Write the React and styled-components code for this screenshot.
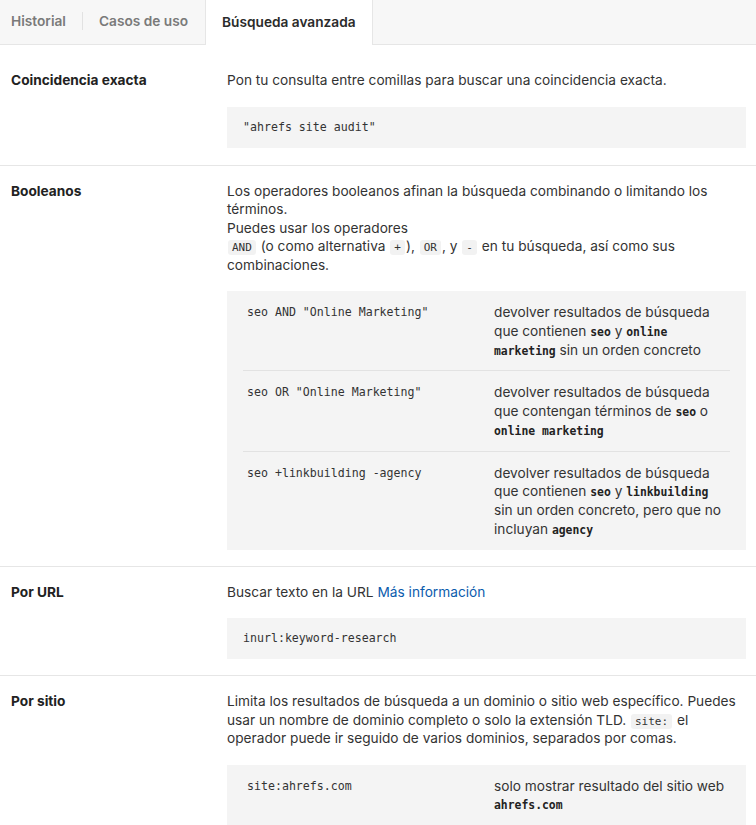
import React from "react";
import styled, { createGlobalStyle, css } from "styled-components";

const GlobalStyle = createGlobalStyle`
  html, body {
    margin: 0;
    padding: 0;
    background: #ffffff;
  }
  body {
    font-family: Inter, "Noto Sans", "Liberation Sans", sans-serif;
    color: #333333;
    -webkit-font-smoothing: antialiased;
  }
`;

const mono = `"DejaVu Sans Mono", "Liberation Mono", monospace`;

const Page = styled.div`
  width: 756px;
`;

const TabBar = styled.div`
  display: flex;
  align-items: stretch;
  height: 45px;
  background: #f7f7f7;
  border-bottom: 1px solid #e6e6e6;
  box-sizing: border-box;
  padding-left: 11px;
`;

const Tab = styled.div`
  display: flex;
  align-items: center;
  font-size: 13.7px;
  font-weight: 600;
  color: #7a7a7a;
  padding: 0 16px 2px 0;
  ${(p) =>
    p.$divider &&
    css`
      &::after {
        content: "";
        width: 1px;
        height: 18px;
        background: #e2e2e2;
        margin-left: 16px;
      }
    `}
  ${(p) =>
    p.$active &&
    css`
      color: #2b2b2b;
      background: #ffffff;
      padding: 0 16px 2px;
      margin-bottom: -1px;
      margin-left: 1px;
      border-left: 1px solid #e6e6e6;
      border-right: 1px solid #e6e6e6;
    `}
`;

const List = styled.div`
  padding-top: 10px;
`;

const Section = styled.section`
  display: grid;
  grid-template-columns: 216px 1fr;
  padding: 16px 10px 16px 11px;
  border-bottom: 1px solid #e6e6e6;
  &:first-child {
    padding-bottom: 17px;
  }
  &:last-child {
    border-bottom: none;
  }
`;

const Label = styled.div`
  font-size: 13.7px;
  font-weight: 700;
  color: #222222;
  line-height: 19px;
`;

const Body = styled.div`
  display: flex;
  flex-direction: column;
  gap: 17px;
`;

const Para = styled.p`
  margin: 0;
  font-size: 13.7px;
  line-height: 18.5px;
  color: #333333;
`;

const Link = styled.a`
  color: #0b5cad;
  text-decoration: none;
`;

const Pill = styled.code`
  font-family: ${mono};
  font-size: 11px;
  line-height: 0;
  background: #f2f2f2;
  border-radius: 3px;
  padding: 1px 4px;
  margin: 0 1px;
  color: #333333;
`;

const CodeBox = styled.div`
  background: #f4f4f4;
  padding: 12px 16px;
  font-family: ${mono};
  font-size: 11.6px;
  line-height: 17px;
  color: #333333;
`;

const Table = styled.div`
  background: #f4f4f4;
  padding: 0 16px;
`;

const Row = styled.div`
  display: grid;
  grid-template-columns: 247px 1fr;
  padding: 12px 4px 11px 4px;
  border-bottom: 1px solid #e2e2e2;
  ${(p) =>
    p.$last &&
    css`
      border-bottom: none;
    `}
`;

const Query = styled.div`
  font-family: ${mono};
  font-size: 11.6px;
  line-height: 18.75px;
  color: #333333;
`;

const Desc = styled.div`
  font-size: 13.7px;
  line-height: 18.75px;
  color: #333333;
`;

const Strong = styled.code`
  font-family: ${mono};
  font-size: 11.4px;
  line-height: 0;
  font-weight: 700;
  color: #222222;
`;

export default function App() {
  return (
    <Page>
      <GlobalStyle />
      <TabBar>
        <Tab $divider>Historial</Tab>
        <Tab>Casos de uso</Tab>
        <Tab $active>Búsqueda avanzada</Tab>
      </TabBar>
      <List>
        <Section>
          <Label>Coincidencia exacta</Label>
          <Body>
            <Para>Pon tu consulta entre comillas para buscar una coincidencia exacta.</Para>
            <CodeBox>"ahrefs site audit"</CodeBox>
          </Body>
        </Section>

        <Section>
          <Label>Booleanos</Label>
          <Body>
            <Para>
              Los operadores booleanos afinan la búsqueda combinando o limitando los términos.
              <br />
              Puedes usar los operadores
              <br />
              <Pill>AND</Pill> (o como alternativa <Pill>+</Pill>), <Pill>OR</Pill>, y{" "}
              <Pill>-</Pill> en tu búsqueda, así como sus combinaciones.
            </Para>
            <Table>
              <Row>
                <Query>seo AND "Online Marketing"</Query>
                <Desc>
                  devolver resultados de búsqueda que contienen <Strong>seo</Strong> y{" "}
                  <Strong>online marketing</Strong> sin un orden concreto
                </Desc>
              </Row>
              <Row>
                <Query>seo OR "Online Marketing"</Query>
                <Desc>
                  devolver resultados de búsqueda que contengan términos de <Strong>seo</Strong> o{" "}
                  <Strong>online marketing</Strong>
                </Desc>
              </Row>
              <Row $last>
                <Query>seo +linkbuilding -agency</Query>
                <Desc>
                  devolver resultados de búsqueda que contienen <Strong>seo</Strong> y{" "}
                  <Strong>linkbuilding</Strong> sin un orden concreto, pero que no incluyan{" "}
                  <Strong>agency</Strong>
                </Desc>
              </Row>
            </Table>
          </Body>
        </Section>

        <Section>
          <Label>Por URL</Label>
          <Body>
            <Para>
              Buscar texto en la URL <Link href="#">Más información</Link>
            </Para>
            <CodeBox>inurl:keyword-research</CodeBox>
          </Body>
        </Section>

        <Section>
          <Label>Por sitio</Label>
          <Body>
            <Para>
              Limita los resultados de búsqueda a un dominio o sitio web específico. Puedes usar un
              nombre de dominio completo o solo la extensión TLD. <Pill>site:</Pill> el operador
              puede ir seguido de varios dominios, separados por comas.
            </Para>
            <Table>
              <Row>
                <Query>site:ahrefs.com</Query>
                <Desc>
                  solo mostrar resultado del sitio web <Strong>ahrefs.com</Strong>
                </Desc>
              </Row>
              <Row>
                <Query>site:ahrefs.com,moz.com</Query>
                <Desc>
                  mostrar resultados de los sitios web <Strong>ahrefs.com</Strong> y{" "}
                  <Strong>moz.com</Strong>
                </Desc>
              </Row>
            </Table>
          </Body>
        </Section>
      </List>
    </Page>
  );
}
